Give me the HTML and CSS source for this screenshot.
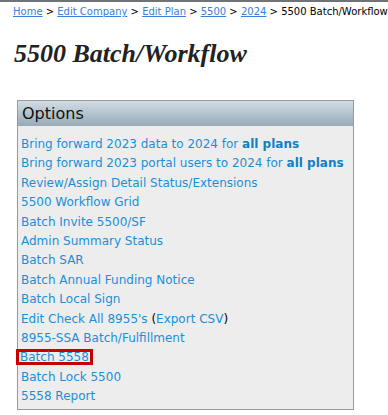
FILE: index.html
```html
<!DOCTYPE html>
<html lang="en">
<head>
  <meta charset="UTF-8">
  <title>5500 Batch/Workflow</title>
  <link rel="stylesheet" href="styles.css">
</head>
<body>
  <div class="crumbs">
    <a href="#">Home</a> &gt; <a href="#">Edit Company</a> &gt; <a href="#">Edit Plan</a> &gt;
    <a href="#">5500</a> &gt; <a href="#">2024</a> &gt; 5500 Batch/Workflow
  </div>

  <h1>5500 Batch/Workflow</h1>

  <div class="options">
    <div class="options-head">Options</div>
    <ul class="options-list">
      <li><a href="#">Bring forward 2023 data to 2024 for <b>all plans</b></a></li>
      <li><a href="#">Bring forward 2023 portal users to 2024 for <b>all plans</b></a></li>
      <li><a href="#">Review/Assign Detail Status/Extensions</a></li>
      <li><a href="#">5500 Workflow Grid</a></li>
      <li><a href="#">Batch Invite 5500/SF</a></li>
      <li><a href="#">Admin Summary Status</a></li>
      <li><a href="#">Batch SAR</a></li>
      <li><a href="#">Batch Annual Funding Notice</a></li>
      <li><a href="#">Batch Local Sign</a></li>
      <li><a href="#">Edit Check All 8955's</a> (<a href="#">Export CSV</a>)</li>
      <li><a href="#">8955-SSA Batch/Fulfillment</a></li>
      <li><span class="marked"><a href="#">Batch 5558</a></span></li>
      <li><a href="#">Batch Lock 5500</a></li>
      <li><a href="#">5558 Report</a></li>
    </ul>
  </div>
</body>
</html>
```

FILE: styles.css
```css
body {
  margin: 0;
  border-top: 2px solid #6f7377;
  font-family: "DejaVu Sans", Verdana, sans-serif;
  background: white;
}
.crumbs {
  padding: 3px 0 0 13px;
  font-size: 10px;
  line-height: 14px;
  white-space: nowrap;
  color: #000;
}
.crumbs a {
  color: #3b7ddd;
}
h1 {
  margin: 20px 0 0 14px;
  font-family: "Liberation Serif", "Times New Roman", serif;
  font-style: italic;
  font-weight: bold;
  font-size: 26px;
  line-height: 30px;
  color: #222;
}
.options {
  margin: 31px 0 0 17px;
  width: 335px;
  border: 1px solid #9a9a9a;
  background: #ededed;
}
.options-head {
  height: 25px;
  padding-left: 4px;
  font-size: 16px;
  line-height: 25px;
  color: #111;
  background: linear-gradient(#d1dce5, #97aab6);
}
.options-list {
  list-style: none;
  margin: 0;
  padding: 9px 0 2px 3px;
  font-size: 12px;
  line-height: 19.4px;
}
.options-list a {
  color: #1a8fd8;
  text-decoration: none;
}
.options-list b {
  color: #0f7fc7;
}
.marked {
  display: inline-block;
  border: 3px solid #c40000;
  margin-left: -5px;
  padding: 0 1px;
  height: 10px;
  line-height: 10px;
}
```
